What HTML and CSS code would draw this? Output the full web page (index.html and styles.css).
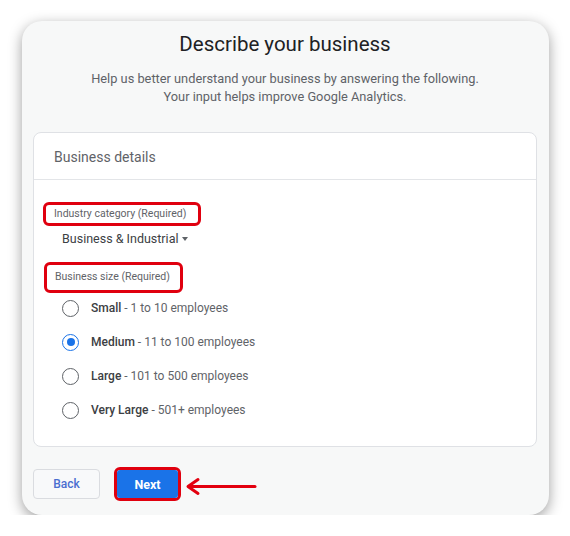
FILE: index.html
```html
<!DOCTYPE html>
<html>
<head>
<meta charset="utf-8">
<link rel="stylesheet" href="styles.css">
</head>
<body>
<div class="panel">
  <h1 class="title">Describe your business</h1>
  <p class="subtitle">Help us better understand your business by answering the following.<br>Your input helps improve Google Analytics.</p>
  <div class="card">
    <div class="card-head">Business details</div>
    <div class="card-body">
      <div class="label label-industry">Industry category (Required)</div>
      <div class="select">Business &amp; Industrial <span class="caret"></span></div>
      <div class="label label-size">Business size (Required)</div>
      <div class="radios">
        <div class="radio-row"><span class="radio"></span><span class="opt"><b>Small</b> - 1 to 10 employees</span></div>
        <div class="radio-row"><span class="radio checked"></span><span class="opt"><b>Medium</b> - 11 to 100 employees</span></div>
        <div class="radio-row"><span class="radio"></span><span class="opt"><b>Large</b> - 101 to 500 employees</span></div>
        <div class="radio-row"><span class="radio"></span><span class="opt"><b>Very Large</b> - 501+ employees</span></div>
      </div>
    </div>
  </div>
  <div class="actions">
    <button class="btn-back">Back</button>
    <span class="next-wrap"><button class="btn-next">Next</button></span>
    <svg class="arrow" width="72" height="20" viewBox="0 0 72 20">
      <path d="M70 9.5 L4 9.5" stroke="#e3000f" stroke-width="3" stroke-linecap="round" fill="none"/>
      <path d="M13 2.5 L3 9.5 L13 16.5" stroke="#e3000f" stroke-width="3" stroke-linecap="round" stroke-linejoin="round" fill="none"/>
    </svg>
  </div>
</div>
</body>
</html>
```
FILE: styles.css
```css
html, body {
  margin: 0;
  padding: 0;
  background: #ffffff;
}
body {
  font-family: Roboto, "Open Sans", Arial, sans-serif;
  color: #3c4043;
  padding: 21px 0 0 22px;
}
.panel {
  width: 527px;
  height: 494px;
  box-sizing: border-box;
  background: #f7f8f8;
  border-radius: 20px;
  box-shadow: 0 4px 14px rgba(0, 0, 0, 0.38);
  padding: 11px 12px 0 11px;
}
.title {
  margin: 0;
  text-align: center;
  font-size: 20.5px;
  line-height: 24px;
  font-weight: 400;
  color: #202124;
}
.subtitle {
  margin: 14px 0 0;
  text-align: center;
  font-size: 12.8px;
  line-height: 18px;
  color: #5f6368;
}
.card {
  margin-top: 26px;
  background: #ffffff;
  border: 1px solid #dfe1e5;
  border-radius: 8px;
  height: 315px;
  box-sizing: border-box;
}
.card-head {
  height: 47px;
  box-sizing: border-box;
  border-bottom: 1px solid #e3e5e8;
  padding: 15px 0 0 20px;
  font-size: 14px;
  line-height: 18px;
  color: #5f6368;
}
.card-body {
  padding: 22px 0 0 9px;
}
.label {
  display: inline-block;
  border: 3px solid #e0000f;
  border-radius: 6px;
  font-size: 10.5px;
  color: #5f6368;
  line-height: 12px;
  box-sizing: border-box;
  white-space: nowrap;
}
.label-industry {
  width: 158px;
  height: 24px;
  padding: 3px 0 0 8px;
}
.label-size {
  width: 139px;
  height: 31px;
  padding: 6px 0 0 8px;
  margin-left: 1px;
  margin-top: 2px;
}
.select {
  margin: 5px 0 0 19px;
  font-size: 12.5px;
  line-height: 16px;
  height: 29px;
  color: #3c4043;
  display: flex;
  align-items: flex-start;
}
.caret {
  display: inline-block;
  width: 0;
  height: 0;
  border-left: 3.5px solid transparent;
  border-right: 3.5px solid transparent;
  border-top: 4px solid #5f6368;
  margin: 6px 0 0 4px;
}
.radios {
  margin-top: -2px;
  padding-left: 19px;
}
.radio-row {
  display: flex;
  align-items: center;
  height: 34px;
}
.radio {
  width: 17px;
  height: 17px;
  box-sizing: border-box;
  border: 1.5px solid #5f6368;
  border-radius: 50%;
  display: flex;
  align-items: center;
  justify-content: center;
}
.radio.checked {
  border-color: #1a73e8;
}
.radio.checked::after {
  content: "";
  width: 8px;
  height: 8px;
  border-radius: 50%;
  background: #1a73e8;
}
.opt {
  margin-left: 12px;
  font-size: 12px;
  color: #5f6368;
}
.opt b {
  font-weight: 500;
  color: #3c4043;
}
.actions {
  margin-top: 20px;
  display: flex;
  align-items: center;
}
.btn-back {
  width: 67px;
  height: 30px;
  background: #f8f9fa;
  border: 1px solid #dadce0;
  border-radius: 4px;
  font-family: inherit;
  font-size: 12px;
  font-weight: 500;
  color: #4a6ed0;
  padding: 0;
}
.next-wrap {
  margin-left: 14px;
  border: 3px solid #e0000f;
  border-radius: 6px;
  display: inline-flex;
}
.btn-next {
  width: 61px;
  height: 28px;
  background: #1a73e8;
  border: none;
  border-radius: 3px;
  font-family: inherit;
  font-size: 12.5px;
  font-weight: 700;
  color: #ffffff;
  padding: 0;
}
.arrow {
  margin-left: 4px;
  margin-top: 6px;
}
```
